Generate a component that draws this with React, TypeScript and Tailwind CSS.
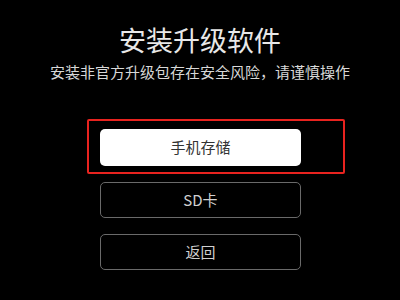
import React from "react";

export default function App() {
  const font = { fontFamily: '"Noto Sans CJK SC", "Noto Sans", sans-serif' };
  return (
    <div className="relative w-[400px] h-[300px] bg-black overflow-hidden" style={font}>
      <div className="flex flex-col items-center pt-[24px]">
        <div className="text-[27px] leading-[32px] text-[#e8e8e8]">安装升级软件</div>
        <div className="mt-[6px] text-[15px] leading-[20px] text-[#d8d8d8]">安装非官方升级包存在安全风险，请谨慎操作</div>
        <div className="mt-[47px] flex flex-col gap-[16px] w-[201px] ml-[1px]">
          <div className="h-[37px] rounded-[5px] bg-white flex items-center justify-center text-[15px] text-[#333]">手机存储</div>
          <div className="h-[36px] rounded-[5px] border-[1.5px] border-[#6a6a6a] flex items-center justify-center text-[15px] text-[#d0d0d0]">SD卡</div>
          <div className="h-[36px] rounded-[5px] border-[1.5px] border-[#6a6a6a] flex items-center justify-center text-[15px] text-[#d0d0d0]">返回</div>
        </div>
      </div>
      <div className="absolute left-[87px] top-[119px] w-[258px] h-[55px] border-2 border-[#e8231f] rounded-[2px]" />
    </div>
  );
}
